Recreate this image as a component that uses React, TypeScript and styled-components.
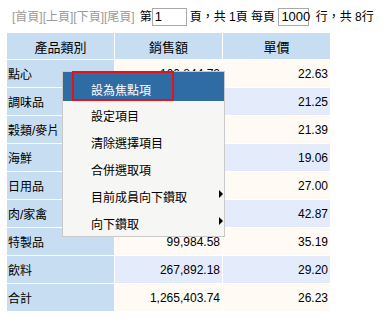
import React from "react";
import styled, { createGlobalStyle } from "styled-components";

const Global = createGlobalStyle`
  html, body { margin: 0; padding: 0; background: #fff; }
  body {
    font-family: "Liberation Sans", "Noto Sans CJK TC", sans-serif;
    font-size: 12px;
    color: #000;
  }
`;

const Page = styled.div`
  position: relative;
  width: 389px;
  height: 323px;
  overflow: hidden;
`;

const Pager = styled.div`
  display: flex;
  align-items: center;
  height: 18px;
  margin: 8px 0 0 12px;
  white-space: pre;
  line-height: 18px;
`;

const Links = styled.span`
  color: #9a9a9a;
  margin-right: 5px;
`;

const PageInput = styled.div<{ $w: number }>`
  box-sizing: border-box;
  width: ${(p) => p.$w}px;
  height: 18px;
  border: 1px solid #a9a9a9;
  padding: 0 2px;
  line-height: 16px;
  font-size: 13px;
  margin: 0 3px 0 0;
`;

const Grid = styled.table`
  border-collapse: separate;
  border-spacing: 1px;
  margin: 6px 0 0 6px;
  table-layout: fixed;
`;

const Head = styled.th`
  width: 107px;
  height: 26px;
  padding: 0;
  background: #c7ddf1;
  font-weight: normal;
  text-align: center;
  font-size: 13px;
`;

const Label = styled.td`
  height: 27px;
  padding: 0 0 0 1px;
  background: #c7ddf1;
  text-align: left;
`;

const Num = styled.td<{ $alt: boolean }>`
  height: 27px;
  padding: 0 2px 0 0;
  background: ${(p) => (p.$alt ? "#e4ecfc" : "#fffaf4")};
  text-align: right;
`;

const Menu = styled.div`
  position: absolute;
  left: 62px;
  top: 71px;
  width: 163px;
  box-sizing: border-box;
  border: 1px solid #c9c9c9;
  background: #f6f6f4;
`;

const Item = styled.div<{ $focus?: boolean }>`
  position: relative;
  box-sizing: border-box;
  height: ${(p) => (p.$focus ? 29 : 27)}px;
  padding: ${(p) => (p.$focus ? 11 : 8)}px 0 0 28px;
  line-height: 17px;
  background: ${(p) => (p.$focus ? "#2f6ca4" : "transparent")};
  color: ${(p) => (p.$focus ? "#fff" : "#000")};
`;

const Arrow = styled.span`
  position: absolute;
  right: 1px;
  top: 8px;
  width: 0;
  height: 0;
  border-left: 4px solid #000;
  border-top: 4px solid transparent;
  border-bottom: 4px solid transparent;
`;

const Mark = styled.div`
  position: absolute;
  left: 72px;
  top: 71px;
  width: 102px;
  height: 30px;
  box-sizing: border-box;
  border: 2px solid #e8101c;
`;

const rows: [string, string, string][] = [
  ["點心", "160,844.72", "22.63"],
  ["調味品", "106,047.09", "21.25"],
  ["穀類/麥片", "95,744.59", "21.39"],
  ["海鮮", "131,261.74", "19.06"],
  ["日用品", "234,507.29", "27.00"],
  ["肉/家禽", "163,022.36", "42.87"],
  ["特製品", "99,984.58", "35.19"],
  ["飲料", "267,892.18", "29.20"],
  ["合計", "1,265,403.74", "26.23"],
];

const menuItems: { label: string; sub?: boolean }[] = [
  { label: "設為焦點項" },
  { label: "設定項目" },
  { label: "清除選擇項目" },
  { label: "合併選取項" },
  { label: "目前成員向下鑽取", sub: true },
  { label: "向下鑽取", sub: true },
];

export default function App() {
  return (
    <Page>
      <Global />
      <Pager>
        <Links>[首頁][上頁][下頁][尾頁]</Links>
        <span>第</span>
        <PageInput $w={35}>1</PageInput>
        <span>頁，共 1頁 每頁 </span>
        <PageInput $w={31}>1000</PageInput>
        <span> 行，共 8行</span>
      </Pager>
      <Grid>
        <thead>
          <tr>
            <Head>產品類別</Head>
            <Head>銷售額</Head>
            <Head>單價</Head>
          </tr>
        </thead>
        <tbody>
          {rows.map((r, i) => (
            <tr key={r[0]}>
              <Label>{r[0]}</Label>
              <Num $alt={i % 2 === 1}>{r[1]}</Num>
              <Num $alt={i % 2 === 1}>{r[2]}</Num>
            </tr>
          ))}
        </tbody>
      </Grid>
      <Menu>
        {menuItems.map((m, i) => (
          <Item key={m.label} $focus={i === 0}>
            {m.label}
            {m.sub && <Arrow />}
          </Item>
        ))}
      </Menu>
      <Mark />
    </Page>
  );
}
